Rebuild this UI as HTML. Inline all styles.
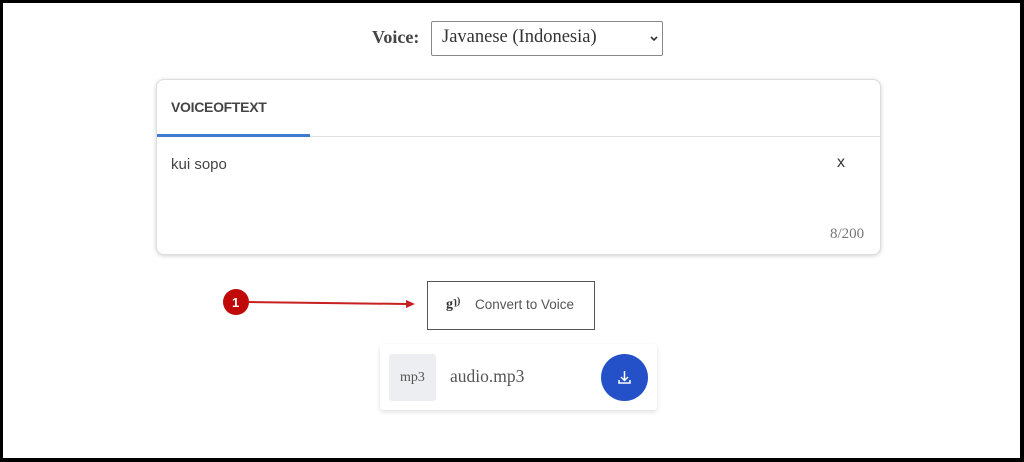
<!DOCTYPE html>
<html><head><meta charset="utf-8"><style>
*{box-sizing:border-box;margin:0;padding:0}
html,body{width:1024px;height:462px;overflow:hidden;background:#000}
.page{position:absolute;left:3px;top:3px;width:1017px;height:455px;background:#fff}
.abs{position:absolute}
.serif{font-family:"Liberation Serif",serif}
.sans{font-family:"Liberation Sans",sans-serif}
</style></head><body>
<div class="page"></div>
<div class="abs serif" style="left:372px;top:27px;font-size:18px;font-weight:bold;color:#444">Voice:</div>
<div class="abs serif" style="left:431px;top:21px;width:232px;height:35px;border:1px solid #888;border-radius:2px;font-size:18.5px;color:#333;padding:5px 10px">Javanese (Indonesia)
<svg class="abs" style="left:218px;top:14px" width="8" height="6" viewBox="0 0 8 6"><path d="M1 1l3 3 3-3" fill="none" stroke="#333" stroke-width="1.6"/></svg></div>
<div class="abs" style="left:156px;top:79px;width:725px;height:176px;border:1px solid #ddd;border-radius:8px;box-shadow:0 1px 4px rgba(0,0,0,.18);background:#fff"></div>
<div class="abs sans" style="left:171px;top:99px;font-size:14px;font-weight:bold;color:#444;letter-spacing:-0.3px">VOICEOFTEXT</div>
<div class="abs" style="left:157px;top:136px;width:723px;height:1px;background:#e2e2e2"></div>
<div class="abs" style="left:157px;top:134px;width:153px;height:3px;background:#3d7ad0"></div>
<div class="abs sans" style="left:171px;top:156px;font-size:15px;color:#444">kui sopo</div>
<div class="abs sans" style="left:837px;top:154px;font-size:16px;color:#333">x</div>
<div class="abs serif" style="left:830px;top:226px;font-size:15px;color:#777">8/200</div>
<svg class="abs" style="left:220px;top:287px" width="200" height="30"><circle cx="16" cy="15" r="13" fill="#c00a0a"/><text x="12" y="20" font-family="Liberation Sans" font-size="13" font-weight="bold" fill="#fff">1</text><path d="M29 15 L186 17" stroke="#c72020" stroke-width="2"/><path d="M186 13 L195 17 L186 21z" fill="#c72020"/></svg>
<div class="abs" style="left:427px;top:281px;width:168px;height:49px;border:1px solid #555;background:#fff"></div>
<div class="abs serif" style="left:446px;top:296px;font-size:14px;font-weight:bold;color:#333">g<span style="font-size:10px;vertical-align:4px">ɿ)</span></div>
<div class="abs sans" style="left:475px;top:297px;font-size:13.5px;color:#555">Convert to Voice</div>
<div class="abs" style="left:380px;top:344px;width:277px;height:66px;background:#fff;box-shadow:0 2px 5px rgba(0,0,0,.12);border-radius:3px"></div>
<div class="abs serif" style="left:389px;top:354px;width:47px;height:47px;background:#eceef1;border-radius:3px;font-size:14px;color:#555;text-align:center;line-height:47px">mp3</div>
<div class="abs serif" style="left:450px;top:366px;font-size:17.5px;color:#555">audio.mp3</div>
<div class="abs" style="left:601px;top:354px;width:47px;height:47px;border-radius:50%;background:#2551c8"></div>
<svg class="abs" style="left:616px;top:369px" width="17" height="17" viewBox="0 0 17 17"><path d="M8.5 2v9M5 8l3.5 3.5L12 8M3 11v3h11v-3" fill="none" stroke="#fff" stroke-width="1.5"/></svg>
</body></html>
